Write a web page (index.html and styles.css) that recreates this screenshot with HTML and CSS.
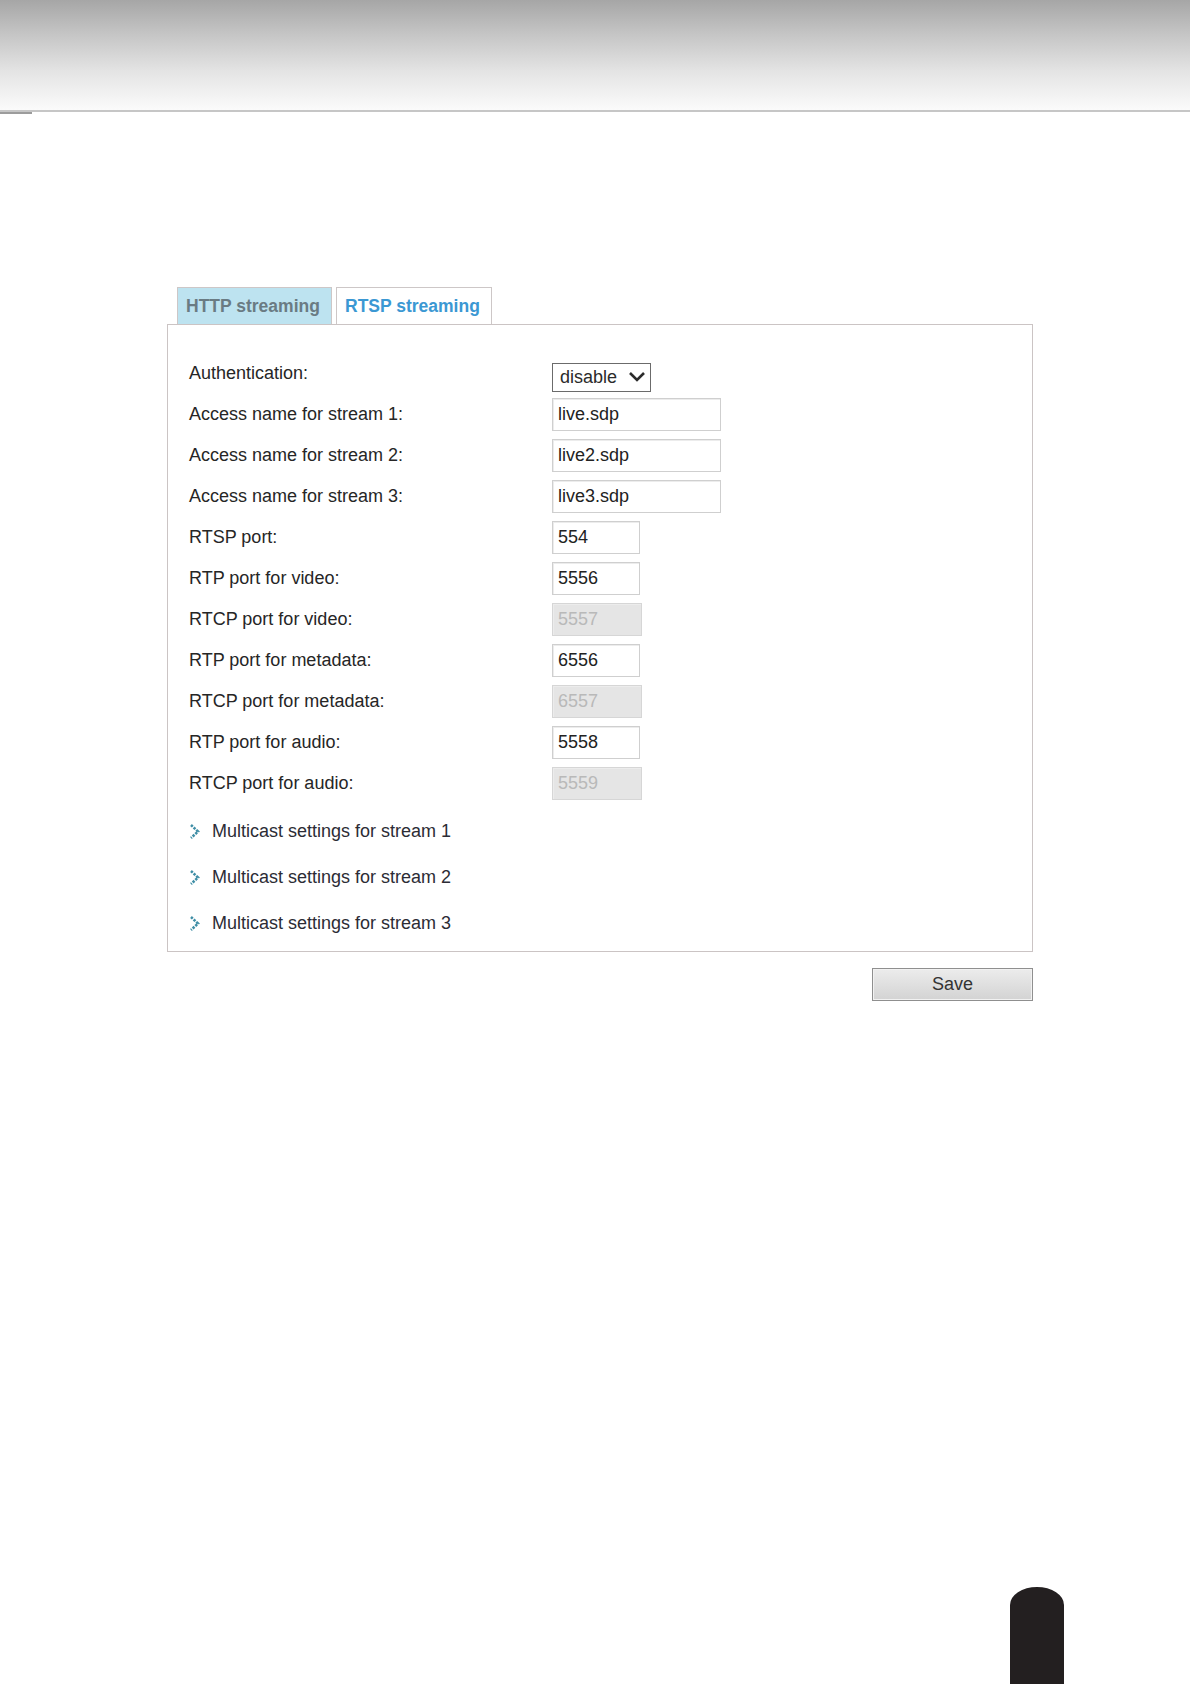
FILE: index.html
```html
<!DOCTYPE html>
<html>
<head>
  <title>RTSP streaming</title>
  <link rel="stylesheet" href="styles.css">
</head>
<body>
  <div class="page-header"></div>
  <div class="header-rule"><span class="rule-mark"></span></div>

  <div class="settings">
    <div class="tabs">
      <div class="tab tab-off">HTTP streaming</div>
      <div class="tab tab-on">RTSP streaming</div>
    </div>

    <div class="panel">
      <div class="row">
        <span class="label">Authentication:</span>
        <div class="select"><span>disable</span>
          <svg width="18" height="12" viewBox="0 0 18 12"><path d="M2 2 L9 9 L16 2" fill="none" stroke="#2b2b2b" stroke-width="2.6"/></svg>
        </div>
      </div>
      <div class="row">
        <span class="label">Access name for stream 1:</span>
        <input class="field wide" type="text" value="live.sdp">
      </div>
      <div class="row">
        <span class="label">Access name for stream 2:</span>
        <input class="field wide" type="text" value="live2.sdp">
      </div>
      <div class="row">
        <span class="label">Access name for stream 3:</span>
        <input class="field wide" type="text" value="live3.sdp">
      </div>
      <div class="row">
        <span class="label">RTSP port:</span>
        <input class="field port" type="text" value="554">
      </div>
      <div class="row">
        <span class="label">RTP port for video:</span>
        <input class="field port" type="text" value="5556">
      </div>
      <div class="row">
        <span class="label">RTCP port for video:</span>
        <input class="field port" type="text" value="5557" disabled>
      </div>
      <div class="row">
        <span class="label">RTP port for metadata:</span>
        <input class="field port" type="text" value="6556">
      </div>
      <div class="row">
        <span class="label">RTCP port for metadata:</span>
        <input class="field port" type="text" value="6557" disabled>
      </div>
      <div class="row">
        <span class="label">RTP port for audio:</span>
        <input class="field port" type="text" value="5558">
      </div>
      <div class="row">
        <span class="label">RTCP port for audio:</span>
        <input class="field port" type="text" value="5559" disabled>
      </div>

      <div class="multicast">
        <div class="mc-row">
          <svg class="mc-arrow" width="11" height="17" viewBox="0 0 11 17"><path d="M2 2 L9 8.5 L2 15" fill="none" stroke="#3f8ea6" stroke-width="2.6" stroke-dasharray="2.4 1.2"/></svg>
          <span>Multicast settings for stream 1</span>
        </div>
        <div class="mc-row">
          <svg class="mc-arrow" width="11" height="17" viewBox="0 0 11 17"><path d="M2 2 L9 8.5 L2 15" fill="none" stroke="#3f8ea6" stroke-width="2.6" stroke-dasharray="2.4 1.2"/></svg>
          <span>Multicast settings for stream 2</span>
        </div>
        <div class="mc-row">
          <svg class="mc-arrow" width="11" height="17" viewBox="0 0 11 17"><path d="M2 2 L9 8.5 L2 15" fill="none" stroke="#3f8ea6" stroke-width="2.6" stroke-dasharray="2.4 1.2"/></svg>
          <span>Multicast settings for stream 3</span>
        </div>
      </div>
    </div>

    <div class="actions">
      <button class="btn-save">Save</button>
    </div>
  </div>

  <div class="page-tab"></div>
</body>
</html>
```

FILE: styles.css
```css
body {
  margin: 0;
  padding: 0;
  background: #fff;
  font-family: "Liberation Sans", Arial, sans-serif;
  color: #262626;
  height: 1684px;
  overflow: hidden;
  position: relative;
}

.page-header {
  height: 110px;
  background: linear-gradient(to bottom, #a6a6a6 0%, #c4c4c4 30%, #e4e4e4 65%, #fbfbfb 100%);
}

.header-rule {
  height: 2px;
  background-color: #c6c6c6;
  position: relative;
}

.rule-mark {
  display: block;
  position: absolute;
  left: 0;
  top: 2px;
  width: 32px;
  height: 2px;
  background-color: #9c9c9c;
}

.settings {
  width: 866px;
  margin: 175px 0 0 167px;
}

.tabs {
  display: flex;
  gap: 4px;
  padding-left: 10px;
}

.tab {
  box-sizing: border-box;
  height: 37px;
  padding: 1px 8px 0;
  display: flex;
  align-items: center;
  font-size: 17.5px;
  font-weight: bold;
  border: 1px solid #cdc7c7;
  border-bottom: none;
}

.tab-off {
  width: 155px;
  background-color: #bde3f0;
  color: #6a7b83;
}

.tab-on {
  width: 156px;
  background-color: #fff;
  color: #3b98d3;
}

.panel {
  border: 1px solid #cbc4c4;
  padding: 28px 20px 5px 21px;
}

.row {
  display: flex;
  align-items: center;
  height: 41px;
}

.label {
  width: 363px;
  font-size: 18px;
  color: #262626;
}

.select {
  box-sizing: border-box;
  width: 99px;
  height: 29px;
  margin-top: 7px;
  border: 1px solid #6b6b6b;
  display: flex;
  align-items: center;
  justify-content: space-between;
  padding: 0 4px 0 7px;
  font-size: 18px;
  color: #2b2b2b;
}

.field {
  box-sizing: border-box;
  height: 33px;
  margin: 0;
  padding: 0 5px;
  border: 1px solid #cfcfcf;
  box-shadow: inset 1px 1px 0 #ececec;
  font-family: "Liberation Sans", Arial, sans-serif;
  font-size: 18px;
  color: #222;
  background-color: #fff;
}

.wide {
  width: 169px;
}

.port {
  width: 88px;
}

.field:disabled {
  width: 90px;
  background-color: #e5e5e5;
  border-color: #d6d6d6;
  color: #b9b9b9;
}

.multicast {
  margin-top: 4px;
}

.mc-row {
  display: flex;
  align-items: center;
  height: 46px;
  font-size: 18px;
  color: #2c2c35;
}

.mc-arrow {
  margin-right: 12px;
}

.actions {
  display: flex;
  justify-content: flex-end;
  margin-top: 16px;
}

.btn-save {
  box-sizing: border-box;
  width: 161px;
  height: 33px;
  border: 1px solid #8f8f8f;
  box-shadow: inset 0 0 0 1px #f2f2f2;
  background: linear-gradient(to bottom, #ececec, #d3d3d3);
  font-family: "Liberation Sans", Arial, sans-serif;
  font-size: 18px;
  color: #333;
  padding: 0;
}

.page-tab {
  position: absolute;
  left: 1010px;
  top: 1587px;
  width: 54px;
  height: 97px;
  background-color: #231f20;
  border-radius: 27px 27px 0 0 / 18px 18px 0 0;
}
```
